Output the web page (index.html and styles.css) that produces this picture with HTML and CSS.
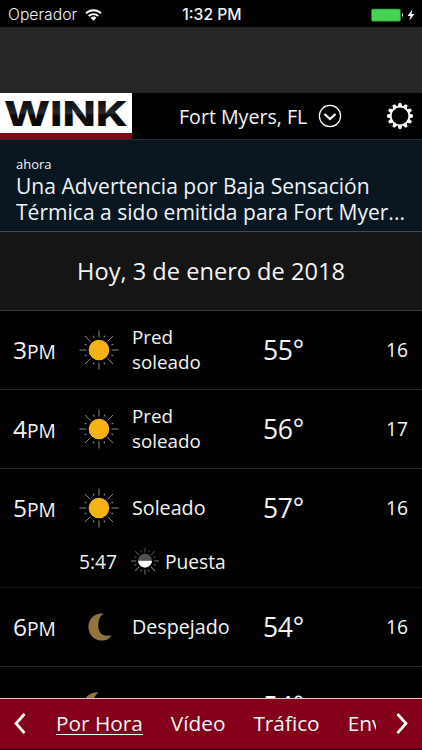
FILE: index.html
```html
<!DOCTYPE html>
<html lang="es">
<head>
    <meta charset="utf-8" />
    <title>WINK - Por Hora</title>
    <link rel="stylesheet" href="styles.css">
</head>
<body>
    <!-- shared icons -->
    <svg class="sprite" width="0" height="0">
        <symbol id="sun" viewBox="0 0 40 40">
            <g stroke="#8a8783" stroke-width="1">
                <path d="M20 .5v7M20 32.500v7M.5 20h7M32.500 20h7M6 6l5.500 5.500M28.500 28.500l5.500 5.500M34 6l-5.500 5.500M11.500 28.500L6 34" />
                <path d="M15 7.500l-.7-1.800M25 7.500l.7-1.800M15 32.500l-.7 1.800M25 32.500l.7 1.800M7.500 15l-1.800-.7M7.500 25l-1.800.7M32.500 15l1.800-.7M32.500 25l1.800.7" stroke-width="1.200" />
            </g>
            <circle cx="20" cy="20" r="10.300" fill="#f7b217" />
        </symbol>
        <symbol id="moon" viewBox="0 0 24 28">
            <path d="M15 .7C6.500 .2.700 6 .7 13.800c0 7.700 5.800 13.500 13 13.500 4.500 0 7.300-1.700 9.300-4.600-7 1.500-13-1.700-13-9.700C10 7 11.500 3 15 .7z" fill="#94743b" stroke="#aea07c" stroke-width=".4" />
        </symbol>
    </svg>

    <div class="status-bar">
        <div class="carrier">
            <span>Operador</span>
            <svg width="17" height="12" viewBox="0 0 17 12">
                <path d="M1 4.300a10.700 10.700 0 0 1 15 0M3.700 7a7 7 0 0 1 9.600 0" fill="none" stroke="#fff" stroke-width="1.900" />
                <path d="M5.600 8.900a4.200 4.200 0 0 1 5.800 0L8.500 11.800z" fill="#fff" />
            </svg>
        </div>
        <div class="clock">1:32 PM</div>
        <div class="battery">
            <svg width="45" height="14" viewBox="0 0 45 14">
                <rect x=".5" y="1" width="29" height="12.200" rx="1.500" fill="#45d552" stroke="#2f7c37" stroke-width=".7" />
                <path d="M31 5c1.500.5 1.500 3.500 0 4z" fill="#ddd" />
                <path d="M41.500 1.500L36.500 8h3l-1.200 4.500L43.500 6h-3z" fill="#fff" />
            </svg>
        </div>
    </div>
    <div class="ad"></div>

    <div class="header">
        <svg class="logo" width="132" height="46" viewBox="0 0 132 46">
            <defs>
                <linearGradient id="ink" x1="0" y1="0" x2="0" y2="1">
                    <stop offset=".2" stop-color="#0b0c0e" />
                    <stop offset=".5" stop-color="#24272b" />
                    <stop offset=".56" stop-color="#08090b" />
                </linearGradient>
            </defs>
            <rect width="132" height="46" fill="#fff" />
            <rect y="40" width="132" height="6" fill="#7d0d19" />
            <text x="4" y="32.500" textLength="124" lengthAdjust="spacingAndGlyphs" fill="url(#ink)">WINK</text>
        </svg>
        <div class="location">
            <span>Fort Myers, FL</span>
            <svg width="24" height="24" viewBox="0 0 24 24" fill="none" stroke="#fff">
                <circle cx="12" cy="12" r="10.600" stroke-width="1.200" />
                <path d="M6.500 10l5.500 5 5.500-5" stroke-width="2.200" />
            </svg>
        </div>
        <svg class="gear" width="28" height="28" viewBox="-14 -14 28 28">
            <circle r="9.300" fill="none" stroke="#fff" stroke-width="1.800" />
            <g fill="#fff">
                <path id="tooth" d="M-2.400-9.500L-1.200-13h2.400l1.200 3.500z" />
                <use href="#tooth" transform="rotate(30)" />
                <use href="#tooth" transform="rotate(60)" />
                <use href="#tooth" transform="rotate(90)" />
                <use href="#tooth" transform="rotate(120)" />
                <use href="#tooth" transform="rotate(150)" />
                <use href="#tooth" transform="rotate(180)" />
                <use href="#tooth" transform="rotate(210)" />
                <use href="#tooth" transform="rotate(240)" />
                <use href="#tooth" transform="rotate(270)" />
                <use href="#tooth" transform="rotate(300)" />
                <use href="#tooth" transform="rotate(330)" />
            </g>
        </svg>
    </div>

    <div class="alert">
        <div class="alert-time">ahora</div>
        <div class="alert-text">Una Advertencia por Baja Sensación<br>Térmica a sido emitida para Fort Myer...</div>
    </div>

    <div class="date">Hoy, 3 de enero de 2018</div>

    <div class="hours">
        <div class="hour">
            <div class="time">3<small>PM</small></div>
            <svg class="icon"><use href="#sun" /></svg>
            <div class="sky two-lines">Pred soleado</div>
            <div class="temp">55°</div>
            <div class="wind">16</div>
        </div>
        <div class="hour">
            <div class="time">4<small>PM</small></div>
            <svg class="icon"><use href="#sun" /></svg>
            <div class="sky two-lines">Pred soleado</div>
            <div class="temp">56°</div>
            <div class="wind">17</div>
        </div>
        <div class="hour-group">
            <div class="hour">
                <div class="time">5<small>PM</small></div>
                <svg class="icon"><use href="#sun" /></svg>
                <div class="sky">Soleado</div>
                <div class="temp">57°</div>
                <div class="wind">16</div>
            </div>
            <div class="sunset">
                <span class="sunset-time">5:47</span>
                <svg width="28" height="28" viewBox="0 0 40 40">
                    <g stroke="#777" stroke-width="1.500">
                        <path d="M20 1v7M6 6l5.500 5.500M34 6l-5.500 5.500M15 7.500l-1-2.500M25 7.500l1-2.500M7.500 15L5 14M32.500 15l2.500-1" stroke="#4c4c4c" />
                        <path d="M0 20h7.500M32.500 20H40M20 32v7M28.500 28.500L34 34M11.500 28.500L6 34M15 32.500l-1 2.500M25 32.500l1 2.500M7.500 25L5 26M32.500 25l2.500 1" />
                    </g>
                    <path d="M10 19.500a10 10 0 0 1 20 0z" fill="#505050" />
                    <path d="M10 19.500a10 10 0 0 0 20 0z" fill="#fff" />
                </svg>
                <span>Puesta</span>
            </div>
        </div>
        <div class="hour">
            <div class="time">6<small>PM</small></div>
            <svg class="icon moon"><use href="#moon" /></svg>
            <div class="sky">Despejado</div>
            <div class="temp">54°</div>
            <div class="wind">16</div>
        </div>
        <div class="hour">
            <div class="time">7<small>PM</small></div>
            <svg class="icon moon cloudy"><use href="#moon" /></svg>
            <div class="sky">Despejado</div>
            <div class="temp">54°</div>
            <div class="wind"></div>
        </div>
    </div>

    <div class="nav">
        <svg width="14" height="24" viewBox="0 0 14 24"><path d="M11.500 2L3 11.500l8.500 9.500" /></svg>
        <div class="tabs">
            <span class="active">Por Hora</span>
            <span>Vídeo</span>
            <span>Tráfico</span>
            <span>Envíe</span>
        </div>
        <svg width="14" height="24" viewBox="0 0 14 24"><path d="M2.500 2L11 11.500l-8.500 9.500" /></svg>
    </div>
</body>
</html>
```

FILE: styles.css
```css
* {
    box-sizing: border-box;
}
body {
    margin: 0;
    width: 422px;
    height: 750px;
    display: flex;
    flex-direction: column;
    overflow: hidden;
    background-color: #000;
    color: #f4f4f4;
    font-family: "Open Sans", sans-serif;
}
svg {
    display: block;
    flex-shrink: 0;
}
.sprite {
    display: none;
}
/* iOS status bar */
.status-bar {
    display: grid;
    grid-template-columns: 1fr auto 1fr;
    align-items: center;
    flex: 0 0 27px;
    padding: 2px 6px 0 8px;
    font-family: Inter, sans-serif;
    font-size: 15.700px;
}
.carrier {
    display: flex;
    align-items: center;
    gap: 8px;
    font-weight: 350;
}
.clock {
    font-weight: 500;
}
.battery {
    justify-self: end;
}
.ad {
    flex: 0 0 66px;
    background-color: #262626;
}
.header {
    display: flex;
    align-items: center;
    flex: 0 0 47px;
    border-bottom: 1px solid #2b2e30;
}
.logo text {
    font-family: Inter, sans-serif;
    font-size: 34px;
    font-weight: 800;
}
.location {
    display: flex;
    align-items: center;
    gap: 11px;
    margin-left: 47px;
    font-size: 19.600px;
}
.gear {
    margin-left: auto;
    margin-right: 8px;
}
.alert {
    flex: 0 0 92px;
    padding: 15px 0 0 16px;
    background-color: #0b1720;
    border-bottom: 1px solid #494b4c;
    color: #edf3f7;
    white-space: nowrap;
}
.alert-time {
    font-size: 13px;
    line-height: 19px;
}
.alert-text {
    font-size: 21.050px;
    line-height: 25.500px;
}
.date {
    display: flex;
    align-items: center;
    justify-content: center;
    flex: 0 0 79px;
    background-color: #151515;
    border-bottom: 1px solid #3a3a3a;
    font-size: 23.600px;
}
.hours {
    flex: 1;
    min-height: 0;
    overflow: hidden;
}
.hour {
    display: grid;
    grid-template-columns: 66px 53px 131px 1fr auto;
    align-items: center;
    height: 79px;
    padding: 0 14px 0 13px;
    border-bottom: 1px solid #252525;
}
.hour-group {
    height: 119px;
    border-bottom: 1px solid #161616;
}
.hour-group .hour {
    height: 78px;
    border-bottom: none;
}
.time {
    margin-bottom: 2px;
    font-size: 24.500px;
}
.time small {
    font-size: 19.200px;
}
.icon {
    width: 40px;
    height: 40px;
}
.moon {
    width: 24px;
    height: 28px;
    margin-left: 9px;
}
.moon.cloudy {
    margin-left: 4px;
}
.sky {
    width: 110px;
    margin-bottom: 2px;
    font-size: 19.700px;
    line-height: 25px;
}
.two-lines {
    margin-bottom: 0;
    font-size: 18.800px;
}
.temp {
    font-size: 26.500px;
    letter-spacing: -0.3px;
}
.wind {
    margin-bottom: 2px;
    font-size: 19.200px;
}
.sunset {
    display: flex;
    align-items: center;
    height: 28px;
    padding-left: 79px;
    font-size: 19.200px;
}
.sunset-time {
    width: 52px;
}
.sunset svg {
    margin-right: 6px;
}
/* bottom tab bar */
.nav {
    display: flex;
    align-items: center;
    flex: 0 0 52px;
    padding: 0 13px;
    background-color: #84001a;
    border-top: 1px solid #e6c7cc;
    border-bottom: 1px solid #26040a;
}
.nav svg {
    fill: none;
    stroke: #fff;
    stroke-width: 2.700;
}
.tabs {
    display: flex;
    align-items: flex-start;
    gap: 28px;
    width: 320px;
    margin: 0 auto 1px 29px;
    overflow: hidden;
    font-size: 20.800px;
    line-height: 22px;
    white-space: nowrap;
}
.active {
    border-bottom: 1px solid #fff;
}
```
